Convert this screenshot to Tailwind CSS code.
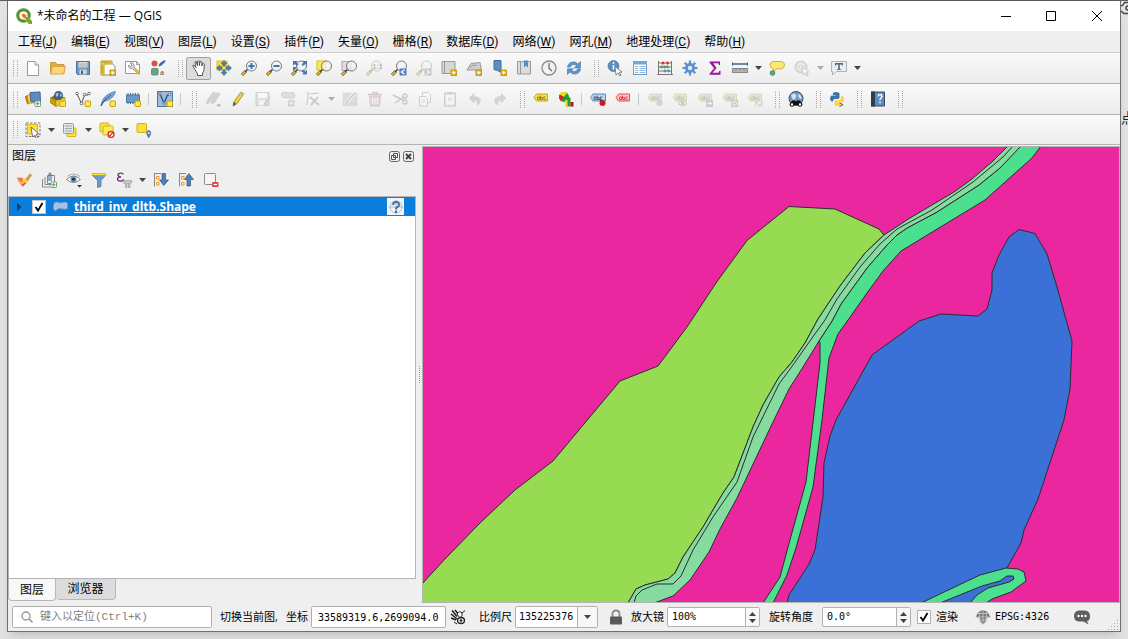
<!DOCTYPE html>
<html lang="zh-CN">
<head>
    <meta charset="UTF-8">
    <meta name="viewport" content="width=device-width, initial-scale=1.0">
    <script src="https://cdn.jsdelivr.net/npm/@tailwindcss/browser@4"></script>
    <title>*未命名的工程 — QGIS</title>
</head>
<body class="relative h-screen overflow-hidden bg-[#e4e4e4] pt-px pl-[7px] pr-[7px] pb-[7px] font-['Open_Sans','Noto_Sans_CJK_SC',sans-serif] text-xs text-black">

<!-- ICONS -->
<svg class="hidden" xmlns="http://www.w3.org/2000/svg">
    <symbol id="badge" viewBox="0 0 16 16"><rect x="9.500" y="9.500" width="6.500" height="6.500" rx="1" fill="#c4a000"/><path d="M12.700 10.500v4.500M10.500 12.700h4.500M11.200 11.200l3 3M14.200 11.200l-3 3" stroke="#fff" stroke-width=".8"/></symbol>
    <symbol id="box" viewBox="0 0 16 16"><rect x="10" y="10" width="5.500" height="5.500" rx=".8" fill="#fce94f" stroke="#c4a000"/></symbol>
    <symbol id="logo" viewBox="0 0 16 16"><circle cx="7.500" cy="7.500" r="5.700" fill="#fff" stroke="#589632" stroke-width="3.200"/><path d="M9.500 9.500l6 6" stroke="#fff" stroke-width="4"/><path d="M9.500 9h2.500l4 4v3h-3.200L9.500 12.500z" fill="#7fa82a"/><path d="M5.800 5.800h2.700l1.800 1.800v2.700H8L5.800 8z" fill="#ee7913"/></symbol>

    <symbol id="new" viewBox="0 0 16 16"><path d="M2.500 1.500h7.500l3.500 3.500v10.500h-11z" fill="#fff" stroke="#999"/><path d="M10 1.500v3.500h3.500" fill="#eee" stroke="#999"/></symbol>
    <symbol id="open" viewBox="0 0 16 16"><path d="M.5 2.500h5l1.500 2h7v9H.5z" fill="#dfb04a" stroke="#c79a3a"/><path d="M2.500 6.500h13l-2 7.500H.5z" fill="#ffd875" stroke="#d9a63c"/></symbol>
    <symbol id="save" viewBox="0 0 16 16"><path d="M1.500 1.500h13v13h-12l-1-1z" fill="#6d97c4" stroke="#47719f"/><rect x="3.500" y="2" width="9" height="5.500" fill="#ddd"/><path d="M4 4h8M4 6h8" stroke="#aaa"/><rect x="4.500" y="9.500" width="7" height="5" fill="#d3d7cf"/><rect x="6" y="10.500" width="2" height="3.500" fill="#3f6796"/></symbol>
    <symbol id="layout" viewBox="0 0 16 16"><path d="M3.500 3.500h8.500l3 3v8.500H3.500z" fill="#fff" stroke="#888"/><path d="M1 1h11v3H4v11H1z" fill="#edd06a" stroke="#c4a000"/><path d="M3 1.500v1.500M5 1.500v1.500M7 1.500v1.500M9 1.500v1.500M1.500 6h1.500M1.500 8h1.500M1.500 10h1.500M1.500 12h1.500" stroke="#8f7600" stroke-width=".8"/><use href="#badge"/></symbol>
    <symbol id="layouts" viewBox="0 0 16 16"><path d="M.5 1.500h11l3 3v9H.5z" fill="#fff" stroke="#999"/><path d="M11.500 1.500v3h3" fill="none" stroke="#999"/><path d="M5 3a3 3 0 0 1 4 4l5.500 5-1.500 2-5.500-5.500A3 3 0 0 1 3.500 5l2 1.500L7 5z" fill="#d3d7cf" stroke="#888" stroke-width=".8"/><path d="M9.500 9.500l5 5" stroke="#e0b43c" stroke-width="2"/></symbol>
    <symbol id="style" viewBox="0 0 16 16"><circle cx="4.500" cy="3.500" r="3" fill="#d2593b"/><path d="M9 6l1-2.500L14.500.5l.8.8L11.500 5z" fill="#466d96" stroke="#466d96"/><rect x="1.500" y="8.500" width="6.500" height="6.500" rx="1" fill="#6ba184" stroke="#4d8a69" stroke-width=".8"/><text x="10" y="15" font-size="9" font-family="Liberation Serif, serif" fill="#444">a</text></symbol>

    <symbol id="hand" viewBox="0 0 16 16"><path d="M4 9.500L2 6.500Q1.500 5 3 5.200l2 2.300-1-5Q4 1.200 5.200 1.500L6.500 5.500V1.300Q7.200.2 8.300 1.200V5.500L9 1.800Q10 .9 10.800 2v4l.8-2.500q1-.6 1.700.4L13 9.500q-.2 2.500-1.500 3.500v2.500h-5V13.500Q5 12 4 9.500z" fill="#fff" stroke="#444" stroke-width=".9"/></symbol>
    <symbol id="pansel" viewBox="0 0 16 16"><rect x="1" y="1" width="10" height="9" fill="#fbe03a" stroke="#d8bd20"/><g fill="#4f7fb5" stroke="#3a648f" stroke-width=".6"><path d="M8 .5l3 3.200H9.200V6H6.800V3.700H5z"/><path d="M8 15.500l3-3.200H9.200V10H6.800v2.300H5z"/><path d="M.5 8l3.200-3v1.800H6v2.400H3.700V11z"/><path d="M15.500 8l-3.200-3v1.800H10v2.400h2.300V11z"/></g></symbol>
    <symbol id="lens" viewBox="0 0 16 16"><path d="M1 15l3.800-3.800" stroke="#2e2e2e" stroke-width="2.800"/><path d="M1 15l3.300-3.300" stroke="#f0b62a" stroke-width="1.800"/><path d="M4.500 11.500l2-2" stroke="#333" stroke-width="1.500"/><circle cx="10.500" cy="6" r="5" fill="#eef3f5" fill-opacity=".75" stroke="#777"/></symbol>
    <symbol id="zin" viewBox="0 0 16 16"><use href="#lens"/><path d="M10.500 3v6M7.500 6h6" stroke="#3f75b5" stroke-width="2"/></symbol>
    <symbol id="zout" viewBox="0 0 16 16"><use href="#lens"/><path d="M7.500 6h6" stroke="#3f75b5" stroke-width="2"/></symbol>
    <symbol id="zfull" viewBox="0 0 16 16"><use href="#lens"/><g fill="#4a79b0"><path d="M2 1h5L5.500 2.500 7.500 4.500 6 6 3.800 4 2 5.800z"/><path d="M16 1h-5l1.500 1.500L10.500 4.500 12 6l2.200-2L16 5.800z"/><path d="M16 14.500h-5l1.500-1.500-2-2L12 9.500l2.200 2 1.800-1.800z"/><path d="M2 7h4.500L4 9.500 2 11z"/></g></symbol>
    <symbol id="zsel" viewBox="0 0 16 16"><rect x="1" y="1" width="9" height="9" fill="#fce94f" stroke="#d8bd20"/><use href="#lens"/></symbol>
    <symbol id="zlay" viewBox="0 0 16 16"><rect x="1" y="1.500" width="9" height="9" fill="#ddd" stroke="#aaa"/><use href="#lens"/></symbol>
    <symbol id="znat" viewBox="0 0 16 16"><use href="#lens"/><text x="6.500" y="8.500" font-size="7" font-weight="bold" font-family="Liberation Sans, sans-serif" fill="#444">1:1</text></symbol>
    <symbol id="zlast" viewBox="0 0 16 16"><use href="#lens"/><rect x="8.500" y="8.500" width="7" height="7" rx="1" fill="#4f7fb5"/><path d="M13.500 9.800L10.500 12l3 2.200" fill="none" stroke="#fff" stroke-width="1.400"/></symbol>
    <symbol id="znext" viewBox="0 0 16 16"><use href="#lens"/><rect x="8.500" y="8.500" width="7" height="7" rx="1" fill="#777"/><path d="M10.500 9.800l3 2.200-3 2.200" fill="none" stroke="#fff" stroke-width="1.400"/></symbol>
    <symbol id="mapview" viewBox="0 0 16 16"><path d="M1 1.500h2.500v12H1zM3.500 1.500H14v12H3.500z" fill="#d6d6d6" stroke="#9a9a9a"/><use href="#badge"/></symbol>
    <symbol id="map3d" viewBox="0 0 16 16"><path d="M1 10l4-6.500L14 2.500l1.500 7.500z" fill="#cfcfcf" stroke="#999"/><path d="M4 8l3-3 4 .5" stroke="#999" fill="none"/><use href="#badge"/></symbol>
    <symbol id="bmnew" viewBox="0 0 16 16"><path d="M3 .5h7v12l-3.500-2L3 9.500z" fill="#5d8cbf" stroke="#3f6d9e"/><use href="#badge"/></symbol>
    <symbol id="bm" viewBox="0 0 16 16"><path d="M1.500 1.500h3v12.500h-3zM4.500 1.500h10v12.500h-10z" fill="#dcdcdc" stroke="#999"/><path d="M8 .5h4v7l-2-1.700L8 7.500z" fill="#5d8cbf"/></symbol>
    <symbol id="clock" viewBox="0 0 16 16"><circle cx="8" cy="8" r="7" fill="#f2f2f2" stroke="#888" stroke-width="1.300"/><path d="M8 3v5.200l3 3" stroke="#666" stroke-width="1.200" fill="none"/></symbol>
    <symbol id="refresh" viewBox="0 0 16 16"><path d="M1.500 7C2 3 6 1 9.500 2.300L12 4l2.500-2.500V8H8.500L10.500 5.500C8 3.700 5 4.500 4.500 7z" fill="#5e96d0" stroke="#3a6ea5" stroke-width=".6"/><path d="M14.500 9C14 13 10 15 6.500 13.700L4 12l-2.500 2.500V8.800h6L5.500 10.500c2.500 1.800 5.500 1 6-1.500z" fill="#5e96d0" stroke="#3a6ea5" stroke-width=".6"/></symbol>

    <symbol id="cursor" viewBox="0 0 16 16"><path d="M8 6.500l7 5.500-2.800.4 1.800 2.800-1.300.8-1.700-3-2 2z" fill="#fff" stroke="#777" stroke-width=".9"/></symbol>
    <symbol id="info" viewBox="0 0 16 16"><circle cx="6.500" cy="6" r="5.500" fill="#5d8cbf" stroke="#47719f" stroke-width=".6"/><path d="M6.500 2v1.700M6.500 5v4.500" stroke="#fff" stroke-width="1.600"/><use href="#cursor"/></symbol>
    <symbol id="table" viewBox="0 0 16 16"><rect x="1.500" y="1.500" width="13" height="13" fill="#fff" stroke="#6b9bd0"/><path d="M1 1h14v3.500H1z" fill="#7ba7d6"/><path d="M3 6.500h3M7.500 6.500h6M3 8.500h3M7.500 8.500h6M3 10.500h3M7.500 10.500h6M3 12.500h3M7.500 12.500h6" stroke="#8fb6de"/></symbol>
    <symbol id="abacus" viewBox="0 0 16 16"><path d="M1.500 1v14M14.500 1v14M1.500 3h13M1.500 7h13M1.500 11h13M0 14.500h16" stroke="#777" fill="none"/><g fill="#ef2929"><circle cx="6" cy="3" r="1.500"/><circle cx="10.500" cy="3" r="1.500"/></g><g fill="#4e9a5a"><circle cx="4.500" cy="7" r="1.400"/><circle cx="7.500" cy="7" r="1.400"/><circle cx="10.500" cy="7" r="1.400"/></g><g fill="#5d8cbf"><circle cx="8" cy="11" r="1.400"/><circle cx="11.500" cy="11" r="1.400"/></g></symbol>
    <symbol id="gear" viewBox="0 0 16 16"><path d="M8 .5v15M.5 8h15M2.700 2.700l10.600 10.600M13.300 2.700L2.700 13.300" stroke="#5b90cc" stroke-width="2.200"/><circle cx="8" cy="8" r="5" fill="#5b90cc"/><circle cx="8" cy="8" r="2.300" fill="#dbe7f4"/></symbol>
    <symbol id="sum" viewBox="0 0 16 16"><path d="M2.500 1.500h10.500v3.500h-1l-.8-1.800H6.200L9.500 8l-4 4.800h6l1-2h1v4H2.500v-1L7 8.300 2.500 2.500z" fill="#a30ea3"/></symbol>
    <symbol id="measure" viewBox="0 0 16 16"><path d="M0 4h16M.5 2.500v3M15.500 2.500v3" stroke="#3f6796" stroke-width="1.300"/><rect x=".5" y="8.500" width="15" height="4" fill="#b5b5b5" stroke="#888"/><path d="M4 9v1.500M8 9v1.500M12 9v1.500" stroke="#777"/></symbol>
    <symbol id="tip" viewBox="0 0 16 16"><path d="M4 1.500h8.500q3 .5 3 3.500t-3 3.800H7L4.500 12V8.800Q1 8 1 5t3-3.500z" fill="#fbe97a" stroke="#cdb13a"/><circle cx="3.500" cy="13" r="2.300" fill="#6ba184" stroke="#4d8a69"/></symbol>
    <symbol id="actions" viewBox="0 0 16 16"><circle cx="7" cy="7" r="5.500" fill="#ddd" stroke="#999" stroke-width="2"/><circle cx="7" cy="7" r="2" fill="#fff" stroke="#999"/><use href="#cursor"/></symbol>
    <symbol id="annot" viewBox="0 0 16 16"><path d="M.5 1.500h15v10H5.500L1.500 15v-3.500h-1z" fill="#e8eff3" stroke="#a8b4bc"/><path d="M4 3h8v2.500h-1L10.500 4.500H8.800v4.500h1v1H6.200V9h1V4.500H5.500L5 5.500H4z" fill="#666"/></symbol>

    <symbol id="dsm" viewBox="0 0 16 16"><path d="M0 5.500l5-2L8 11l-5.500 2z" fill="#c9732a" stroke="#a85d1e" stroke-width=".6"/><path d="M2 4.500l6-2 2 9-6 1.500z" fill="#f3cf4a" stroke="#c4a000" stroke-width=".6"/><path d="M5 1.500l10-.5.500 9.500-9.500.5z" fill="#5d8cbf" stroke="#3f6796"/><rect x="10" y="10" width="5.500" height="5.500" rx=".8" fill="#fff" stroke="#6ba184"/><path d="M12.700 11v3.500M11 12.700h3.500" stroke="#4e9a5a"/></symbol>
    <symbol id="geopkg" viewBox="0 0 16 16"><path d="M.5 6.500L6 9.500v6L.5 12z" fill="#c9a100" stroke="#8f7600" stroke-width=".6"/><path d="M.5 6.500l6-3 8.500 3-9 3z" fill="#8f7600"/><path d="M6 9.500l9-3v6l-9 3z" fill="#f0c93a" stroke="#a88a00" stroke-width=".6"/><circle cx="8.500" cy="4.500" r="4.200" fill="#45658a" stroke="#2f4c6e" stroke-width=".6"/><path d="M5.500 3q3-2 3 0t-2 3zM10.500 2.500q2 1 1 3.500-2-1-1-3.500z" fill="#a9c6e3"/><use href="#box"/></symbol>
    <symbol id="shp" viewBox="0 0 16 16"><path d="M2 3l4.500 9.500L9.500 4H13" fill="none" stroke="#555"/><g fill="#fff" stroke="#555" stroke-width=".8"><circle cx="2" cy="2.500" r="1.300"/><circle cx="6.500" cy="12.500" r="1.300"/><circle cx="9.500" cy="3.500" r="1.300"/><circle cx="14" cy="2.500" r="1.300"/></g><use href="#box"/></symbol>
    <symbol id="feather" viewBox="0 0 16 16"><path d="M1 15Q2 7 8 3.500 12 1 15.500.5 14 5.500 11 7.500 7 10 3.500 10.500z" fill="#7fa8d4" stroke="#4a78aa" stroke-width=".8"/><path d="M1 15Q4 8 11 4" stroke="#2f5680" fill="none"/><use href="#box"/></symbol>
    <symbol id="memory" viewBox="0 0 16 16"><path d="M3 2v11M5.500 2v11M8 2v11M10.500 2v11M13 2v11" stroke="#3f6796"/><rect x="1.500" y="4" width="13" height="7.500" fill="#6d97c4" stroke="#4a78aa"/><use href="#box"/></symbol>
    <symbol id="virtual" viewBox="0 0 16 16"><rect x=".5" y=".5" width="15" height="15" fill="#9dbce0" stroke="#4a78aa"/><path d="M3 3l4 9 3.500-8H13" fill="none" stroke="#28456a" stroke-width="1.200"/><g fill="#fff" stroke="#28456a" stroke-width=".7"><circle cx="3" cy="3" r="1.200"/><circle cx="7" cy="12" r="1.200"/><circle cx="12.500" cy="3.500" r="1.200"/></g><use href="#box"/></symbol>
    <symbol id="edits" viewBox="0 0 16 16"><path d="M1.500 13l1-4 6-8 2.500 1.500-6 8.500zM6.500 13l1-4 5-7.500 2.500 1.500-5 8z" fill="#a08c8c" stroke="#777" stroke-width=".6"/><path d="M11.500 13.500h4.500L13.700 16z" fill="#222"/></symbol>
    <symbol id="pencil" viewBox="0 0 16 16"><path d="M3 15l.8-4L11 1l2.800 1.800L6.500 13z" fill="#f0d53c" stroke="#9c8626" stroke-width=".9"/><path d="M3 15l.8-4 2.700 2z" fill="#555"/><path d="M10 2.500L11 1l2.800 1.800-1 1.500z" fill="#bbb"/></symbol>
    <symbol id="saveedit" viewBox="0 0 16 16"><path d="M1 1.500h13v13H1z" fill="#bbb" stroke="#888"/><rect x="3" y="2" width="9" height="5" fill="#fff"/><rect x="4" y="9.500" width="6" height="5" fill="#fff"/><path d="M9 15l1-3 5-6" stroke="#a08c7c" stroke-width="2" fill="none"/></symbol>
    <symbol id="addpoly" viewBox="0 0 16 16"><path d="M1 3q2-3 5-1.500 4 1 7 0 3 2 1.500 5-2 2-4 .5-4-1-6 0-3-.5-3.500-4z" fill="#bbb" stroke="#888"/><rect x="8" y="9" width="6.500" height="6.500" rx="1" fill="#999"/><path d="M11.200 10v4.500M9 12.200h4.500" stroke="#fff"/></symbol>
    <symbol id="vertex" viewBox="0 0 16 16"><path d="M1 2h4M3 3v4l-1.500 7M5 3l9-1" fill="none" stroke="#777"/><path d="M6 14l7-8M5 6l9 8" stroke="#888" stroke-width="2"/></symbol>
    <symbol id="multi" viewBox="0 0 16 16"><path d="M1 2h14v3.500H1zM1 6.500h14V10H1zM1 11h14v3.500H1z" fill="#b5b5a5" stroke="#999" stroke-width=".6"/><path d="M4 14l1-3.500L13 2" stroke="#fff" stroke-width="3.500" fill="none"/><path d="M4 14l1-3.500L13 2" stroke="#8c7c6c" stroke-width="1.800" fill="none"/></symbol>
    <symbol id="trash" viewBox="0 0 16 16"><path d="M2.500 5h11l-1 10h-9z" fill="#c4a8a8" stroke="#977"/><path d="M1 3.500h14M6 3V1.500h4V3" fill="none" stroke="#977" stroke-width="1.400"/><path d="M5.500 7v6M8 7v6M10.500 7v6" stroke="#fff"/></symbol>
    <symbol id="cut" viewBox="0 0 16 16"><path d="M1 4l10 5M3 12l9-6" stroke="#777" stroke-width="1.400"/><circle cx="13" cy="5" r="2" fill="none" stroke="#777" stroke-width="1.300"/><circle cx="13" cy="11" r="2" fill="none" stroke="#777" stroke-width="1.300"/></symbol>
    <symbol id="copy" viewBox="0 0 16 16"><path d="M5.500 1.500h6l2 2v8h-8z" fill="#fff" stroke="#888"/><path d="M2.500 5.500h6l2 2v7.500h-8z" fill="#fff" stroke="#888"/><path d="M4.500 9h4M4.500 11h4" stroke="#999"/></symbol>
    <symbol id="paste" viewBox="0 0 16 16"><rect x="2.500" y="2" width="11" height="13" fill="#ccc" stroke="#888"/><rect x="4.500" y="4" width="7" height="9.500" fill="#fff"/><rect x="5.500" y="1" width="5" height="2.500" fill="#888"/><path d="M6 7h4M6 9h4" stroke="#999"/></symbol>
    <symbol id="undo" viewBox="0 0 16 16"><path d="M2 7l5-4.500v3q6 0 6.500 4 0 3-3.500 4.500 1.500-4.500-3-5v3z" fill="#a88c84" stroke="#888" stroke-width=".6"/></symbol>
    <symbol id="redo" viewBox="0 0 16 16"><path d="M14 7L9 2.500v3q-6 0-6.500 4Q2.500 12.500 6 14 4.500 9.500 9 9v3z" fill="#94a494" stroke="#888" stroke-width=".6"/></symbol>

    <symbol id="tag" viewBox="0 0 16 16"><path d="M1 6.500L3.500 3H14.500v7H3.500z" fill="currentColor" stroke="#9c8a20" stroke-opacity=".7"/><path d="M4.500 6h2v2.500h-2zM7.500 4.500v4h2v-2h-2M12.800 6h-2v2.500h2" fill="none" stroke="#333" stroke-opacity=".7" stroke-width=".7"/></symbol>
    <symbol id="lab" viewBox="0 0 16 16"><use href="#tag" class="text-[#fce13a]"/></symbol>
    <symbol id="diagram" viewBox="0 0 16 16"><circle cx="6" cy="6" r="5" fill="#17a03a"/><path d="M6 6L1.500 3.500A5 5 0 0 1 9 2z" fill="#fbd913"/><path d="M6 6L1.500 3.500Q.5 7 3 10z" fill="#d8231f"/><path d="M7 9h3v6.500H7z" fill="#fbd913"/><path d="M9.500 6.500h3v9h-3z" fill="#17a03a"/><path d="M12.500 11h3v4.500h-3z" fill="#b11b1b"/></symbol>
    <symbol id="labpin" viewBox="0 0 16 16"><path d="M.5 6.500L3 3h12.500v7H3z" fill="#b7d4f5" stroke="#5d8cbf"/><path d="M4 6h2v2.500H4zM7 4.500v4h2v-2H7M12.300 6h-2v2.500h2" fill="none" stroke="#333" stroke-width=".7"/><path d="M9.500 8l2 3" stroke="#333"/><circle cx="12.500" cy="12" r="3" fill="#c22020"/></symbol>
    <symbol id="labred" viewBox="0 0 16 16"><path d="M1 6.500L3.500 3H14.500v7H3.500z" fill="#ffc4c4" stroke="#f04a4a"/><path d="M4.500 6h2v2.500h-2zM7.500 4.500v4h2v-2h-2M12.800 6h-2v2.500h2" fill="none" stroke="#e03030" stroke-width=".8"/></symbol>
    <symbol id="lg1" viewBox="0 0 16 16"><use href="#tag" class="text-[#c9c9a0]"/><circle cx="12.500" cy="12" r="3" fill="#999"/></symbol>
    <symbol id="lg2" viewBox="0 0 16 16"><use href="#tag" class="text-[#c9c9a0]"/><path d="M6 12.500q4.500-4 9 0-4.500 4-9 0z" fill="#fff" stroke="#666"/><circle cx="10.500" cy="12.500" r="1.500" fill="#666"/></symbol>
    <symbol id="lg3" viewBox="0 0 16 16"><use href="#tag" class="text-[#c9c9a0]"/><rect x="9" y="9" width="7" height="7" fill="#888"/><path d="M10 12.500h4M12.500 10.500l2 2-2 2" fill="none" stroke="#fff"/></symbol>
    <symbol id="lg4" viewBox="0 0 16 16"><use href="#tag" class="text-[#c9c9a0]"/><rect x="9" y="9" width="7" height="7" fill="#888"/><circle cx="12.500" cy="12.500" r="2" fill="none" stroke="#fff"/></symbol>
    <symbol id="lg5" viewBox="0 0 16 16"><use href="#tag" class="text-[#c9c9a0]"/><path d="M8 9h7.500v6.500H8z" fill="#aaa"/><path d="M9 15l5-5" stroke="#fff" stroke-width="1.500"/></symbol>
    <symbol id="metasearch" viewBox="0 0 16 16"><circle cx="8" cy="7.500" r="7" fill="#7398c2" stroke="#34526f"/><path d="M3 4q4-3 5 0t-3 5zM10 3q4 1 3.500 5-3 0-3.500-5z" fill="#d5e3f0"/><path d="M4 9.500h3l1 1 1-1h3l2.500 4.500h-13z" fill="#111"/><circle cx="4" cy="13.500" r="1.800" fill="#fff" stroke="#111" stroke-width="1.100"/><circle cx="12" cy="13.500" r="1.800" fill="#fff" stroke="#111" stroke-width="1.100"/></symbol>
    <symbol id="python" viewBox="0 0 16 16"><path d="M4 4V2.500Q4 1 7 1t3.500 1.500V6.500Q10 8 8.500 8H5.500Q4 8.500 3.800 10.500H2.500Q1 9.500 1 7.500t1.500-3H7V4z" fill="#3b74a8"/><path d="M12 5h1.500Q15 6 15 8.500t-1.500 3H8.500v.5H12v1.500Q11.500 15 8.500 15T5.500 13.500V10.500Q6 9 7.500 9H10.500Q12 8.500 12 6.500z" fill="#fdd446"/><path d="M10.500 12l3.500 1.700-3.500 1.800" fill="none" stroke="#555"/></symbol>
    <symbol id="help" viewBox="0 0 16 16"><path d="M1.500 1h13v14h-13z" fill="#5d8cbf" stroke="#3a4a5c"/><path d="M1 .5h4v15H1z" fill="#2f3c4a"/><path d="M8 5.500q.2-2 2-2t2 1.800q0 1-1 1.700-1 .6-1 2M10 10.500v1.700" fill="none" stroke="#fff" stroke-width="1.400"/></symbol>

    <symbol id="selrect" viewBox="0 0 16 16"><rect x="1" y="1" width="14" height="13.500" fill="none" stroke="#777" stroke-dasharray="2.500 1.500"/><rect x="2.500" y="2.500" width="10" height="9.500" fill="#fbe03a" stroke="#d8bd20"/><path d="M6 5l8 7-3 .3 1.800 2.800-1.400.9-1.800-3-2 2z" fill="#fff" stroke="#666" stroke-width=".9"/></symbol>
    <symbol id="selform" viewBox="0 0 16 16"><rect x="5" y="6" width="9" height="8.500" rx="1" fill="#fbe03a" stroke="#d0b31c"/><rect x="1.500" y="1.500" width="10" height="10" rx="1" fill="#e2e6ea" stroke="#999"/><path d="M3 4h7M3 6.500h7M3 9h7" stroke="#9aa"/></symbol>
    <symbol id="desel" viewBox="0 0 16 16"><rect x="1" y="1" width="9" height="9" rx="1" fill="#fbe03a" stroke="#d0b31c"/><rect x="4" y="4" width="10" height="9" rx="1" fill="#fdea58" stroke="#d0b31c"/><circle cx="12" cy="12.500" r="3" fill="#fff" stroke="#e03030" stroke-width="1.400"/><path d="M10 14.500l4-4" stroke="#e03030" stroke-width="1.300"/></symbol>
    <symbol id="selloc" viewBox="0 0 16 16"><rect x="1" y="1.500" width="9.500" height="9" rx="1" fill="#fbe03a" stroke="#d0b31c"/><path d="M12.700 16l-2-4q-.6-3.500 2-3.500t2 3.500z" fill="#52779c" stroke="#52779c" stroke-width=".6"/><circle cx="12.700" cy="11" r=".9" fill="#fff"/></symbol>

    <symbol id="brush" viewBox="0 0 16 16"><path d="M9.500 7.500L14 2l1.500 1-4 6z" fill="#d9a34a" stroke="#b07a25" stroke-width=".6"/><path d="M1 5.500h5l5.500 4.500-4.500 4.500Q2 11.500 1 5.500z" fill="#f5b64a"/><path d="M1 5.500q3 1 5 .3L8 7.500 5.500 10q-3-1-4.500-4.500z" fill="#e57a50"/><path d="M5 12.500q2.500 0 4-2.500l1 1.500-3 3z" fill="#d8604a"/><path d="M8 6l4 3.500-1.500 1.500-4.500-3z" fill="#f8d13b"/></symbol>
    <symbol id="group" viewBox="0 0 16 16"><path d="M1.500 7v8h8M4 5v7.500h7M6.500 3.500h7v8h-7z" fill="none" stroke="#888"/><path d="M10 9V1.500Q8.500 0 8 2v7" fill="none" stroke="#3f6d9e"/><rect x="10" y="10" width="5.500" height="5.500" rx=".8" fill="#fff" stroke="#6ba184"/><path d="M12.700 11v3.500M11 12.700h3.500" stroke="#4e9a5a"/></symbol>
    <symbol id="eye" viewBox="0 0 16 16"><path d="M.5 7.500q7-7 14 0-7 6-14 0z" fill="#fff" stroke="#888"/><circle cx="7.500" cy="7.200" r="3" fill="#5d8cbf"/><circle cx="7.500" cy="7.200" r="1.300" fill="#223"/><path d="M1 4.500q6-5 13 0" fill="none" stroke="#aaa"/><path d="M11 13h5l-2.500 2.500z" fill="#333"/></symbol>
    <symbol id="filter" viewBox="0 0 16 16"><path d="M1 3h14L10 8.500V14.500l-3.500 1V8.500z" fill="#6f9bcc" stroke="#47719f" stroke-width=".7"/><path d="M1 1.500h14v2H1z" fill="#fbe03a" stroke="#c4a000" stroke-width=".6"/></symbol>
    <symbol id="expr" viewBox="0 0 16 16"><path d="M7.500 2.500Q6.500 1 4.500 1.200 2 1.500 2 3t3 2Q1.500 5 1.500 7t3 2.200q2 0 3.300-1.700" fill="none" stroke="#6b3a6b" stroke-width="1.300"/><path d="M7.500 8.500h8v2.500h-1.500V15.500h-1.500V11h-1.500v4.500H9.500V11h-2z" fill="#ccc" stroke="#999" stroke-width=".7"/></symbol>
    <symbol id="expand" viewBox="0 0 16 16"><path d="M1 1.500h7M1.500 1.500v13" stroke="#888" fill="none"/><path d="M3.500 4.500h2.500v2.500H3.500zM3.500 10.500h2.500V13H3.500z" fill="#fff" stroke="#f0921e"/><path d="M9 1.500h3.500v6.500H15.500L10.800 13.500 6.500 8H9z" fill="#4f7fb5" stroke="#2f5680" stroke-width=".7"/></symbol>
    <symbol id="collapse" viewBox="0 0 16 16"><path d="M1 1.500h7M1.500 1.500v13" stroke="#888" fill="none"/><path d="M3.500 4.500h2.500v2.500H3.500zM3.500 10.500h2.500V13H3.500z" fill="#fff" stroke="#f0921e"/><path d="M9 14h3.500V7.500H15.500L10.800 1.500 6.500 7.500H9z" fill="#4f7fb5" stroke="#2f5680" stroke-width=".7"/></symbol>
    <symbol id="remove" viewBox="0 0 16 16"><rect x="1.500" y="1.500" width="11" height="11" rx="1" fill="#f4f4f4" stroke="#8a8a8a"/><rect x="9" y="10" width="6.500" height="5" rx="1" fill="#e64545"/><path d="M10.500 12.500H14" stroke="#fff" stroke-width="1.200"/></symbol>
</svg>

<!-- desktop behind the window -->
<div class="absolute left-0 top-0 h-px w-full bg-[#5e5a5a]" aria-hidden="true"></div>
<svg class="absolute right-0 top-0 h-4 w-[7px]" viewBox="0 0 7 16" aria-hidden="true"><path d="M7 2.500H3.500L2 5 0 6M7 13.500H3L0 11M7 6a2 2 0 0 0 0 4" fill="none" stroke="#444" stroke-width="1.400"/></svg>
<div class="absolute right-0 top-[108px] h-5 w-[7px] overflow-hidden text-sm leading-5 text-[#222]" aria-hidden="true">点</div>

<!-- WINDOW -->
<div class="relative flex h-full flex-col border-x border-b border-[#707070] bg-[#efefef] shadow-lg">
    <!-- title bar -->
    <header class="flex h-[30px] shrink-0 items-center bg-white pl-2">
        <svg class="size-4"><use href="#logo"/></svg>
        <h1 class="ml-[5px] text-xs">*未命名的工程 — QGIS</h1>
        <div class="ml-auto flex h-full">
            <button class="flex w-[45px] items-center justify-center" aria-label="最小化"><svg class="size-[10px]" viewBox="0 0 10 10"><path d="M0 5.500h10" stroke="#000"/></svg></button>
            <button class="flex w-[45px] items-center justify-center" aria-label="最大化"><svg class="size-[10px]" viewBox="0 0 10 10"><path d="M.5.500h9v9h-9z" fill="none" stroke="#000"/></svg></button>
            <button class="flex w-[47px] items-center justify-center" aria-label="关闭"><svg class="size-[10px]" viewBox="0 0 10 10"><path d="M0 0l10 10M10 0L0 10" stroke="#000"/></svg></button>
        </div>
    </header>

    <!-- menu -->
    <nav class="flex h-[22px] shrink-0 items-center border-b border-[#cfcfcf] pl-[3px] font-['Roboto','Noto_Sans_CJK_SC',sans-serif]" id="menu"></nav>

    <!-- toolbars -->
    <div class="flex h-[31px] shrink-0 items-center border-b border-[#b4b4b4] bg-linear-to-b from-[#fafafa] to-[#ececec]" id="bar1"></div>
    <div class="flex h-[31px] shrink-0 items-center border-b border-[#b4b4b4] bg-linear-to-b from-[#fafafa] to-[#ececec]" id="bar2"></div>
    <div class="flex h-[30px] shrink-0 items-center border-b border-[#b4b4b4] bg-linear-to-b from-[#fafafa] to-[#ececec]" id="bar3"></div>

    <main class="flex min-h-0 flex-1">
        <!-- layers dock -->
        <section class="flex w-[408px] shrink-0 flex-col">
            <div class="flex h-[22px] shrink-0 items-center pl-1 pr-[2px]">
                <h2>图层</h2>
                <button class="ml-auto mr-[3px] size-[11px]" aria-label="浮动"><svg class="size-[11px]" viewBox="0 0 11 11"><rect x=".5" y=".5" width="10" height="10" rx="2" fill="none" stroke="#666"/><path d="M4.500 2.500h4v4h-4zM2.500 4.500h4v4h-4z" fill="#efefef" stroke="#555"/></svg></button>
                <button class="size-[11px]" aria-label="关闭面板"><svg class="size-[11px]" viewBox="0 0 11 11"><rect x=".5" y=".5" width="10" height="10" rx="2" fill="none" stroke="#666"/><path d="M3 3l5 5M8 3L3 8" stroke="#444" stroke-width="2"/></svg></button>
            </div>
            <div class="mb-1 flex h-[25px] shrink-0 items-center pl-[3px]" id="bar4"></div>
            <div class="min-h-0 flex-1 border border-[#b4b4b4] bg-white">
                <div class="flex h-[19px] items-center bg-[#0b7edb] pl-2 pr-[11px]">
                    <svg class="w-[5px] h-2" viewBox="0 0 5 8"><path d="M0 0l4.500 4L0 8z" fill="#123a66"/></svg>
                    <label class="relative ml-[10px] size-[14px]">
                        <input type="checkbox" checked aria-label="third_inv_dltb.Shape" class="block size-[14px] appearance-none border border-[#c8c8c8] bg-white">
                        <svg class="pointer-events-none absolute inset-0 size-[14px]" viewBox="0 0 14 14"><path d="M3.500 7l2.500 3.500L10.500 3" fill="none" stroke="#000" stroke-width="1.800"/></svg>
                    </label>
                    <svg class="ml-[7px] h-[11px] w-[15px]" viewBox="0 0 15 11"><path d="M.5 4Q1 .5 4 1q3 1.500 6 .5 4-1.500 4.500 1v5q-1.500 1-4 .500L6 7.500 1.500 10Q0 8 .5 4z" fill="#a3c3e6" stroke="#7397bd" stroke-width=".8"/></svg>
                    <span class="ml-[6px] font-bold text-white underline">third_inv_dltb.Shape</span>
                    <button class="ml-auto flex size-[17px] items-center justify-center bg-[#f1f4f7]" aria-label="没有坐标参照系"><svg class="size-4" viewBox="0 0 16 16"><circle cx="8" cy="8" r="6" fill="none" stroke="#a5bfd8"/><path d="M1 8h14M8 1v14" stroke="#a5bfd8"/><path d="M5 6q.3-3 3.200-3T11 5.700Q11 7 9.500 8 8 8.800 8 10.300M8 11.500V14" fill="none" stroke="#4a7099" stroke-width="2"/></svg></button>
                </div>
            </div>
            <div class="flex h-6 shrink-0 items-start" role="tablist">
                <button class="h-[22px] w-12 rounded-b-sm border border-t-0 border-[#b8b8b8] bg-[#f8f8f8]" role="tab" aria-selected="true">图层</button>
                <button class="h-[21px] w-[60px] rounded-b-sm border border-l-0 border-t-0 border-[#b8b8b8] bg-[#dcdcdc]" role="tab">浏览器</button>
            </div>
        </section>
        <div class="flex w-[6px] shrink-0 items-center justify-center" role="separator"><i class="h-[17px] w-px border-l border-dotted border-[#999]"></i></div>

        <!-- map canvas -->
        <div class="mt-px min-w-0 flex-1 border border-[#b4b4b4]">
            <svg class="block size-full bg-[#eb27a0]" viewBox="423 147 696 455" preserveAspectRatio="xMidYMid slice" stroke="#2c2c2c" stroke-width="1">
                <path fill="#3b71d7" d="M787 603L789 595 809 564 815 550 823 497 824 463 830 436 836 420 872 355 919 321 941 314 978 316 987 309 992 290V273L999 255 1009 237 1019 229.500 1035 233.500 1047 254 1057 287 1072 341 1070 389 1064 420 1038 499 1024 530 1021 543 1007 568 1019 576 1012 588 990 597 980 603z"/>
                <path fill="#4cdf8d" d="M921 603L980 575 1006 568 1018 569 1024 572 1026 581 1011 592 992 599 986 603H970L977 595 988 588 1009 582 1014 579 1013 576H1007L1000 581 982 586 940 603z"/>
                <path fill="#4cdf8d" d="M1020 146L1000 168 979 185 937 212 907 228 897 235 887 245 867 268 841 304 832 321 819 341 820 342V363L806 482 788 547 780 577 763 603H773L787 575 796 548 813 487 822 420 829 358 838 334 853 313 867 293 883 271 901 251 985 200 1032 158 1041 146z"/>
                <path fill="#97db52" d="M422 584L444 560 480 523 515 490 553 461 620 381 658 366 687 327 716 283 747 240.500 789 206.500 835 209 879 229 884 235 865 253 840 286 818 319 805 343 792 362 779 377 763 405 753 427 734 477 723 493 703 527 683 557 675 573 668 579 645 585 636 589 628 603H422z"/>
                <path fill="#86dca0" d="M1008 146L993 161 972 179 954 192 910 218 884 235 865 253 840 286 818 319 805 343 792 362 779 377 763 405 753 427 734 477 723 493 703 527 683 557 675 573 668 579 645 585 636 589 628 603H654L673 596 690 580 709 552 720 529 737 498 773 422 789 389 803 367 819 341 832 321 841 304 867 268 887 245 897 235 907 228 937 212 979 185 1000 168 1021 146z"/>
                <path fill="none" d="M1013 146L1003 157 973 182 932 210 897 229 880 244 860 267 837 299 825 320 812 338 793 365 779 384 753 437 737 482 713 517 693 550 681 576 673 584H657L642 590 636 596 634 603"/>
            </svg>
        </div>
    </main>

    <!-- status bar -->
    <footer class="flex h-[28px] shrink-0 items-center pl-1 text-[11px]">
        <label class="flex h-[22px] w-[200px] shrink-0 items-center rounded-xs border border-[#b0b0b0] bg-white pl-2">
            <svg class="size-3 shrink-0" viewBox="0 0 12 12"><circle cx="5" cy="5" r="4" fill="none" stroke="#999" stroke-width="1.400"/><path d="M8 8l3.500 3.500" stroke="#999" stroke-width="1.600"/></svg>
            <input type="text" placeholder="键入以定位(Ctrl+K)" aria-label="定位" class="ml-[7px] w-full bg-transparent font-['Liberation_Mono','Noto_Sans_CJK_SC',monospace] text-[11px] outline-none placeholder:text-[#808080]">
        </label>
        <span class="ml-2 w-[58px] shrink-0 overflow-hidden whitespace-nowrap">切换当前图,</span>
        <label for="coord" class="ml-2 shrink-0">坐标</label>
        <input id="coord" type="text" value="33589319.6,2699094.0" class="ml-[3px] h-[22px] w-[135px] shrink-0 rounded-xs border border-[#b0b0b0] bg-white pl-[6px] font-['DejaVu_Sans_Mono',monospace] text-[10px]">
        <button class="ml-1 shrink-0" aria-label="切换范围和鼠标位置显示"><svg class="size-4" viewBox="0 0 16 16"><path d="M2 1.500l5 6M1 5l6 5M5 1l4 5M1 9l5 2" stroke="#222" stroke-width="1.600"/><path d="M7 5q3-4 5-1 1 3-2 5z" fill="#fff" stroke="#222"/><ellipse cx="11" cy="11.500" rx="3.500" ry="3" fill="#ddd" stroke="#222" stroke-width="1.300"/><circle cx="11" cy="11.500" r="1.200" fill="#222"/><path d="M12 4l3-2.500M4 13l3 2" stroke="#222"/></svg></button>
        <label for="scale" class="ml-[13px] shrink-0">比例尺</label>
        <div class="relative ml-[3px] h-[22px] w-[83px] shrink-0">
            <select id="scale" class="h-full w-full appearance-none rounded-xs border border-[#b0b0b0] bg-white pl-[3px] font-['DejaVu_Sans_Mono',monospace] text-[10px]"><option>135225376</option></select>
            <span class="pointer-events-none absolute inset-y-px right-px flex w-5 items-center justify-center border-l border-[#b0b0b0] bg-[#f7f7f7]"><svg class="h-1 w-[7px]" viewBox="0 0 7 4"><path d="M0 0h7L3.500 4z" fill="#444"/></svg></span>
        </div>
        <button class="ml-3 shrink-0" aria-label="锁定比例尺"><svg class="h-4 w-3" viewBox="0 0 12 16"><path d="M2.500 8V5q0-3.500 3.500-3.500T9.500 5v3" fill="none" stroke="#8a8a8a" stroke-width="1.800"/><rect y="7.500" width="12" height="8" rx="1" fill="#5a5a5a"/></svg></button>
        <label for="magnify" class="ml-[9px] shrink-0">放大镜</label>
        <div class="ml-[3px] flex h-5 w-[93px] shrink-0 rounded-xs border border-[#b0b0b0] bg-white">
            <input id="magnify" type="text" value="100%" class="w-0 flex-1 pl-1 font-['DejaVu_Sans_Mono',monospace] text-[10px]">
            <div class="flex w-[14px] flex-col items-center justify-center gap-[3px] border-l border-[#b0b0b0] bg-[#f7f7f7]">
                <button aria-label="放大"><svg class="block h-1 w-[7px]" viewBox="0 0 7 4"><path d="M0 4h7L3.500 0z" fill="#444"/></svg></button>
                <button aria-label="缩小"><svg class="block h-1 w-[7px]" viewBox="0 0 7 4"><path d="M0 0h7L3.500 4z" fill="#444"/></svg></button>
            </div>
        </div>
        <label for="rotate" class="ml-[9px] shrink-0">旋转角度</label>
        <div class="ml-[9px] flex h-5 w-[89px] shrink-0 rounded-xs border border-[#b0b0b0] bg-white">
            <input id="rotate" type="text" value="0.0°" class="w-0 flex-1 pl-1 font-['DejaVu_Sans_Mono',monospace] text-[10px]">
            <div class="flex w-[14px] flex-col items-center justify-center gap-[3px] border-l border-[#b0b0b0] bg-[#f7f7f7]">
                <button aria-label="增加角度"><svg class="block h-1 w-[7px]" viewBox="0 0 7 4"><path d="M0 4h7L3.500 0z" fill="#444"/></svg></button>
                <button aria-label="减小角度"><svg class="block h-1 w-[7px]" viewBox="0 0 7 4"><path d="M0 0h7L3.500 4z" fill="#444"/></svg></button>
            </div>
        </div>
        <label class="relative ml-[6px] flex shrink-0 items-center gap-[5px]">
            <input type="checkbox" checked class="size-[14px] appearance-none border border-[#b0b0b0] bg-white">
            <svg class="pointer-events-none absolute left-0 size-[14px]" viewBox="0 0 14 14"><path d="M3.500 7l2.500 3.500L10.500 3" fill="none" stroke="#000" stroke-width="1.800"/></svg>
            渲染
        </label>
        <button class="ml-[17px] flex shrink-0 items-center gap-1 font-['DejaVu_Sans_Mono',monospace] text-[10px]">
            <svg class="size-4" viewBox="0 0 16 16"><path d="M.5 8l3-5Q8-.5 12.500 3l3 5-4 1v3L8 15.500 4.500 12V9z" fill="#777"/><path d="M8 1v14M1 8h14M3 4.500h10M5 2.500Q3 8 6 13.500M11 2.500Q13 8 10 13.500M4 11h8" fill="none" stroke="#e6e6e6" stroke-width=".6"/></svg>
            EPSG:4326
        </button>
        <button class="ml-auto shrink-0" aria-label="消息"><svg class="size-4" viewBox="0 0 16 16"><path d="M5 1.500h6Q16 2 16 7t-3 5l1.500 3.500L9.500 12.500H5Q0 12 0 7t5-5.500z" fill="#5e5e5e"/><g fill="#fff"><circle cx="4.500" cy="7" r="1.200"/><circle cx="8" cy="7" r="1.200"/><circle cx="11.500" cy="7" r="1.200"/></g></svg></button>
        <svg class="ml-[18px] mr-px size-[11px] shrink-0 self-end" viewBox="0 0 11 11"><path d="M9.500 0v11M6.500 3v8M3.500 6v5M.500 9v2" stroke="#aaa" stroke-dasharray="1 2"/></svg>
    </footer>
</div>

<script>
    const menus = [['工程', 'J'], ['编辑', 'E'], ['视图', 'V'], ['图层', 'L'], ['设置', 'S'], ['插件', 'P'], ['矢量', 'O'], ['栅格', 'R'], ['数据库', 'D'], ['网络', 'W'], ['网孔', 'M'], ['地理处理', 'C'], ['帮助', 'H']];
    document.getElementById('menu').innerHTML = menus.map(([name, key]) =>
        `<button class="px-[7px] whitespace-nowrap">${name}(<u>${key}</u>)</button>`).join('');

    // '|' handle, '-' separator, 'v' drop-down arrow, leading '~' disabled, leading '!' pressed
    const bars = {
        bar1: 'new open save layout layouts style | !hand pansel zin zout zfull zsel zlay ~znat zlast ~znext mapview map3d bmnew bm clock refresh | info table abacus gear sum measure v tip ~actions ~v annot v',
        bar2: 'dsm geopkg shp feather memory - virtual - | ~edits pencil ~saveedit ~addpoly ~vertex ~v ~multi ~trash ~cut ~copy ~paste ~undo ~redo | lab diagram - labpin labred - ~lg1 ~lg2 ~lg3 ~lg4 ~lg5 | metasearch | python | help |',
        bar3: 'selrect v selform v desel v selloc',
        bar4: 'brush group eye filter expr v expand collapse remove'
    };
    const dots = '<svg class="h-[17px] w-[5px]" viewBox="0 0 5 17"><path d="M.5 0v17M4.500 0v17" stroke="#a8a8a8" stroke-dasharray="1 1"/></svg>';

    function item(code) {
        if (code === '|') return `<span class="flex w-4 shrink-0 items-center pl-2">${dots}</span>`;
        if (code === '-') return '<span class="flex w-[7px] shrink-0 justify-center"><i class="h-3 w-px bg-[#c8c8c8]"></i></span>';
        const off = code[0] === '~';
        const on = code[0] === '!';
        const id = code.replace(/^[~!]/, '');
        if (id === 'v') return `<button class="flex w-3 shrink-0 justify-center ${off ? 'opacity-40' : ''}" aria-label="更多"><svg class="h-1 w-[7px]" viewBox="0 0 7 4"><path d="M0 0h7L3.500 4z" fill="#444"/></svg></button>`;
        return `<button class="flex h-[23px] w-[25px] shrink-0 items-center justify-center ${on ? 'rounded-xs border border-[#a0a0a0] bg-[#dcdcdc]' : ''}" aria-label="${id}"${off ? ' disabled' : ''}><svg class="size-4 ${off ? 'opacity-35' : ''}"><use href="#${id}"/></svg></button>`;
    }

    for (const [id, codes] of Object.entries(bars)) {
        const first = id === 'bar4' ? '' : `<span class="flex w-3 shrink-0 items-center pl-[5px]">${dots}</span>`;
        document.getElementById(id).innerHTML = first + codes.split(' ').map(item).join('');
    }
</script>
</body>
</html>
